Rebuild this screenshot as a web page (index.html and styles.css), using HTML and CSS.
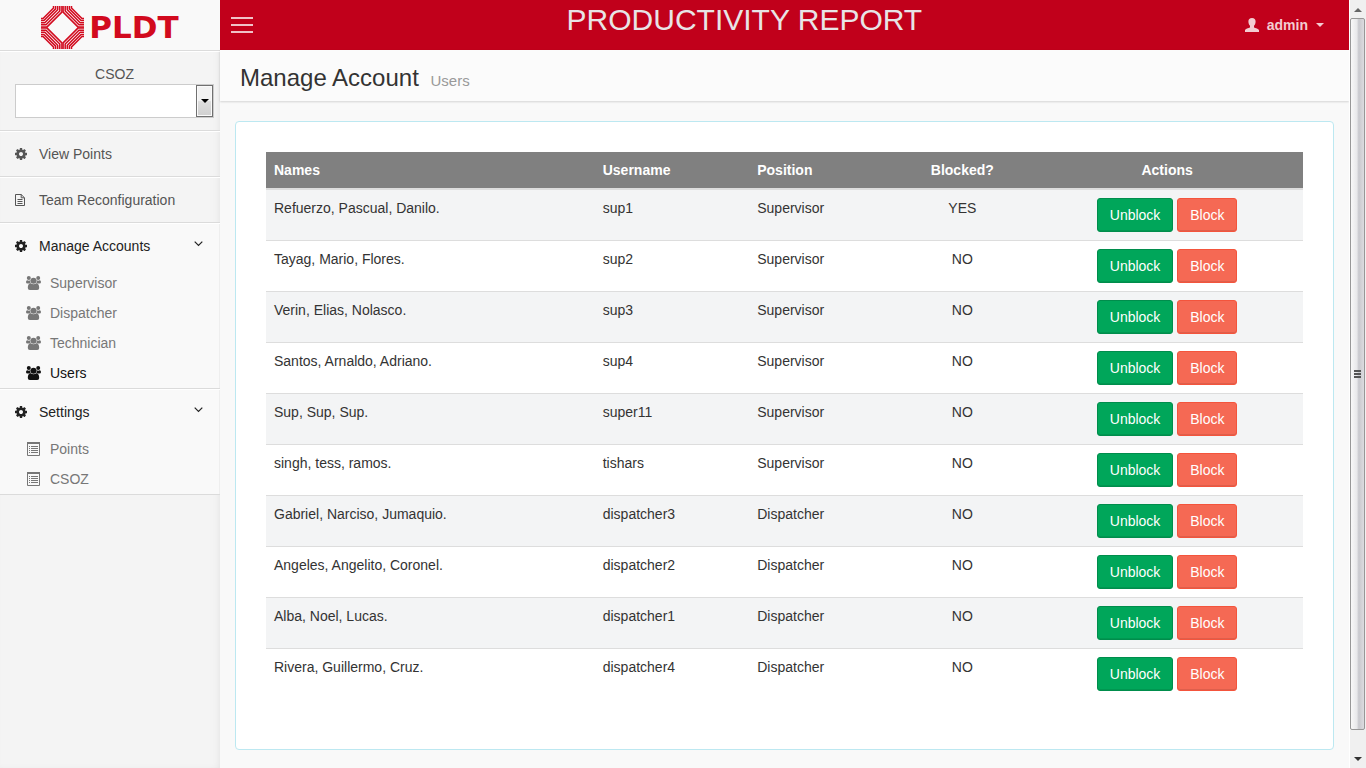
FILE: index.html
```html
<!DOCTYPE html>
<html lang="en">
<head>
<meta charset="utf-8">
<meta name="viewport" content="width=device-width, initial-scale=1">
<title>Productivity Report - Manage Account</title>
<link rel="stylesheet" href="styles.css">
</head>
<body>
<svg class="defs" aria-hidden="true">
  <symbol id="gear" viewBox="0 -128 1536 1536"><path fill="currentColor" d="M1024 640q0-106-75-181t-181-75-181 75-75 181 75 181 181 75 181-75 75-181zm512-109v222q0 12-8 23t-20 13l-185 28q-19 54-39 91 35 50 107 138 10 12 10 25t-9 23q-27 37-99 108t-94 71q-12 0-26-9l-138-108q-44 23-91 38-16 136-29 186-7 28-36 28h-222q-14 0-24.500-8.500t-11.500-21.500l-28-184q-49-16-90-37l-141 107q-10 9-25 9-14 0-25-11-126-114-165-168-7-10-7-23 0-12 8-23 15-21 51-66.500t54-70.500q-27-50-41-99l-183-27q-13-2-21-12.500t-8-23.500v-222q0-12 8-23t19-13l186-28q14-46 39-92-40-57-107-138-10-12-10-24 0-10 9-23 26-36 98.500-107.500t94.500-71.500q13 0 26 10l138 107q44-23 91-38 16-136 29-186 7-28 36-28h222q14 0 24.500 8.500t11.500 21.500l28 184q49 16 90 37l142-107q9-9 24-9 13 0 25 10 129 119 165 170 7 8 7 22 0 12-8 23-15 21-51 66.500t-54 70.500q26 50 41 98l183 28q13 2 21 12.500t8 23.500z"/></symbol>
  <symbol id="file" viewBox="0 0 10 12"><path fill="none" stroke="currentColor" d="M.5.5h5.700l3.300 3.300v7.700h-9zM6.200.5v3.300h3.300M2.500 5.500h5M2.500 7.500h5M2.500 9.500h5"/></symbol>
  <symbol id="group" viewBox="0 0 15 14"><g fill="currentColor"><circle cx="2.800" cy="2" r="2"/><circle cx="12.200" cy="2" r="2"/><path d="M1.300 4.200q1.700 1 3.200-.1a3.600 3.600 0 0 0 .3 3.300H1.500Q0 7.400 0 5.900 0 4.200 1.300 4.200zM13.700 4.200q-1.700 1-3.200-.1a3.600 3.600 0 0 1-.3 3.300h3.300q1.500 0 1.500-1.500 0-1.700-1.300-1.700z"/><circle cx="7.500" cy="4.800" r="3"/><path d="M4.700 7.300q2.800 2 5.600 0 2.900.3 2.900 4.600 0 2.100-2 2.100H3.800q-2 0-2-2.100 0-4.300 2.900-4.600z"/></g></symbol>
  <symbol id="list" viewBox="0 0 13 14"><path fill="none" stroke="currentColor" d="M.5.5h12v13H.5z"/><path fill="currentColor" d="M0 0h13v2H0zM2 4h1v1H2zM2 6h1v1H2zM2 8h1v1H2zM2 10h1v1H2zM4 4h7v1H4zM4 6h7v1H4zM4 8h7v1H4zM4 10h7v1H4z"/></symbol>
  <symbol id="chevron" viewBox="0 0 9 6"><path fill="none" stroke="currentColor" stroke-width="1.200" d="M.7.700l3.800 3.800L8.300.7"/></symbol>
  <symbol id="arc" viewBox="0 0 22 22"><path fill="none" stroke="#d20a1e" stroke-width="1.500" d="M12.500 0V2L2 12.500H0M14.600 0V2.900L2.900 14.600H0M16.700 0V3.800L3.800 16.700H0M18.800 0V5L5 18.800H0M20.900 0V6.100L6.100 20.900H0"/></symbol>
</svg>
<div class="app">
  <aside class="sidebar">
    <a class="brand" href="#" aria-label="PLDT home">
      <svg class="brand-mark" viewBox="0 0 43 43" aria-hidden="true">
        <use href="#arc" width="22" height="22"/>
        <use href="#arc" width="22" height="22" transform="translate(43 0) scale(-1 1)"/>
        <use href="#arc" width="22" height="22" transform="translate(0 43) scale(1 -1)"/>
        <use href="#arc" width="22" height="22" transform="translate(43 43) scale(-1 -1)"/>
      </svg>
      <span class="brand-name">PLDT</span>
    </a>
    <form class="zone">
      <label for="csoz">CSOZ</label>
      <div class="zone-field">
        <select id="csoz"><option></option></select>
        <span class="zone-arrow"></span>
      </div>
    </form>
    <nav>
      <ul class="menu">
        <li><a href="#"><span class="slot"><svg class="i-gear"><use href="#gear"/></svg></span>View Points</a></li>
        <li><a href="#"><span class="slot"><svg class="i-file"><use href="#file"/></svg></span>Team Reconfiguration</a></li>
        <li class="open"><a href="#"><span class="slot"><svg class="i-gear"><use href="#gear"/></svg></span>Manage Accounts<svg class="i-chevron"><use href="#chevron"/></svg></a>
          <ul class="submenu">
            <li><a href="#"><span class="slot"><svg class="i-group"><use href="#group"/></svg></span>Supervisor</a></li>
            <li><a href="#"><span class="slot"><svg class="i-group"><use href="#group"/></svg></span>Dispatcher</a></li>
            <li><a href="#"><span class="slot"><svg class="i-group"><use href="#group"/></svg></span>Technician</a></li>
            <li><a class="current" href="#"><span class="slot"><svg class="i-group"><use href="#group"/></svg></span>Users</a></li>
          </ul>
        </li>
        <li class="open"><a href="#"><span class="slot"><svg class="i-gear"><use href="#gear"/></svg></span>Settings<svg class="i-chevron"><use href="#chevron"/></svg></a>
          <ul class="submenu">
            <li><a href="#"><span class="slot"><svg class="i-list"><use href="#list"/></svg></span>Points</a></li>
            <li><a href="#"><span class="slot"><svg class="i-list"><use href="#list"/></svg></span>CSOZ</a></li>
          </ul>
        </li>
      </ul>
    </nav>
  </aside>
  <div class="main">
    <header class="topbar">
      <button class="toggle" type="button" aria-label="Toggle navigation"><span></span><span></span><span></span></button>
      <div class="app-title">PRODUCTIVITY REPORT</div>
      <button class="user" type="button">
        <svg class="i-user" viewBox="0 0 14 14" aria-hidden="true"><path fill="currentColor" d="M7 0c2.400 0 3.600 1.400 3.600 3.500 0 1.800-.6 3.300-1.600 4.200v1.600c0 .7 4 1.200 5 2.700V14H0v-2c1-1.500 5-2 5-2.700V7.700C4 6.800 3.400 5.300 3.400 3.500 3.400 1.400 4.600 0 7 0z"/></svg>
        <span>admin</span><span class="caret"></span>
      </button>
    </header>
    <div class="page-head"><h1>Manage Account <small>Users</small></h1></div>
    <main class="content">
      <section class="panel">
        <table>
          <colgroup><col class="c-name"><col class="c-user"><col class="c-pos"><col class="c-block"><col class="c-act"></colgroup>
          <thead><tr><th>Names</th><th>Username</th><th>Position</th><th class="mid">Blocked?</th><th class="mid">Actions</th></tr></thead>
          <tbody>
            <tr><td>Refuerzo, Pascual, Danilo.</td><td>sup1</td><td>Supervisor</td><td class="mid">YES</td><td class="mid"><button class="btn ok" type="button">Unblock</button> <button class="btn no" type="button">Block</button></td></tr>
            <tr><td>Tayag, Mario, Flores.</td><td>sup2</td><td>Supervisor</td><td class="mid">NO</td><td class="mid"><button class="btn ok" type="button">Unblock</button> <button class="btn no" type="button">Block</button></td></tr>
            <tr><td>Verin, Elias, Nolasco.</td><td>sup3</td><td>Supervisor</td><td class="mid">NO</td><td class="mid"><button class="btn ok" type="button">Unblock</button> <button class="btn no" type="button">Block</button></td></tr>
            <tr><td>Santos, Arnaldo, Adriano.</td><td>sup4</td><td>Supervisor</td><td class="mid">NO</td><td class="mid"><button class="btn ok" type="button">Unblock</button> <button class="btn no" type="button">Block</button></td></tr>
            <tr><td>Sup, Sup, Sup.</td><td>super11</td><td>Supervisor</td><td class="mid">NO</td><td class="mid"><button class="btn ok" type="button">Unblock</button> <button class="btn no" type="button">Block</button></td></tr>
            <tr><td>singh, tess, ramos.</td><td>tishars</td><td>Supervisor</td><td class="mid">NO</td><td class="mid"><button class="btn ok" type="button">Unblock</button> <button class="btn no" type="button">Block</button></td></tr>
            <tr><td>Gabriel, Narciso, Jumaquio.</td><td>dispatcher3</td><td>Dispatcher</td><td class="mid">NO</td><td class="mid"><button class="btn ok" type="button">Unblock</button> <button class="btn no" type="button">Block</button></td></tr>
            <tr><td>Angeles, Angelito, Coronel.</td><td>dispatcher2</td><td>Dispatcher</td><td class="mid">NO</td><td class="mid"><button class="btn ok" type="button">Unblock</button> <button class="btn no" type="button">Block</button></td></tr>
            <tr><td>Alba, Noel, Lucas.</td><td>dispatcher1</td><td>Dispatcher</td><td class="mid">NO</td><td class="mid"><button class="btn ok" type="button">Unblock</button> <button class="btn no" type="button">Block</button></td></tr>
            <tr><td>Rivera, Guillermo, Cruz.</td><td>dispatcher4</td><td>Dispatcher</td><td class="mid">NO</td><td class="mid"><button class="btn ok" type="button">Unblock</button> <button class="btn no" type="button">Block</button></td></tr>
          </tbody>
        </table>
      </section>
    </main>
  </div>
  <div class="scrollbar" aria-hidden="true">
    <span class="arrow up"></span>
    <span class="thumb"><i></i><i></i><i></i></span>
    <span class="arrow down"></span>
  </div>
</div>
</body>
</html>
```
FILE: styles.css
```css
* { box-sizing: border-box; }
body {
  margin: 0;
  background: #f9f9f9;
  color: #333;
  font: 14px/20px "Liberation Sans", Arial, sans-serif;
}
a { color: inherit; text-decoration: none; }
ul { margin: 0; padding: 0; list-style: none; }
button, select { font: inherit; }
svg { display: block; }
.defs { position: absolute; width: 0; height: 0; }
.app { display: flex; min-height: 100vh; }

/* Sidebar */
.sidebar {
  flex: 0 0 220px;
  background: #f4f4f4;
  box-shadow: inset -3px 0 8px -4px rgba(0, 0, 0, .1);
}
.brand {
  display: flex;
  align-items: center;
  justify-content: center;
  gap: 5px;
  height: 51px;
  padding-top: 4px;
  background: #f9f9f9;
  border-bottom: 1px solid #dbdbdb;
}
.brand-mark { width: 43px; height: 43px; }
.brand-name {
  color: #d20a1e;
  font: bold 31px/40px "DejaVu Sans", sans-serif;
}
.zone {
  padding: 12px 6px 12px 15px;
  border-top: 1px solid #fff;
  border-bottom: 1px solid #dbdbdb;
  color: #555;
  text-align: center;
}
.zone label { display: block; }
.zone-field { position: relative; }
.zone-field select {
  display: block;
  appearance: none;
  width: 100%;
  height: 34px;
  border: 1px solid #ccc;
  border-radius: 0;
  background: #fff;
}
.zone-arrow {
  position: absolute;
  top: 1px;
  right: 1px;
  bottom: 1px;
  width: 17px;
  border: 1px solid #707070;
  box-shadow: inset 0 0 0 1px #fafafa;
  background: linear-gradient(#f2f2f2 0 48%, #dedede 52%, #cfcfcf);
  pointer-events: none;
}
.zone-arrow::after {
  content: "";
  position: absolute;
  top: 13px;
  left: 4px;
  border: solid transparent;
  border-width: 4px 4px 0;
  border-top-color: #000;
}
.menu > li {
  border-top: 1px solid #fff;
  border-bottom: 1px solid #dbdbdb;
}
.menu > li > a {
  display: flex;
  align-items: center;
  padding: 12px 17px 12px 15px;
  color: #555;
}
.menu > .open {
  background: #f9f9f9;
  box-shadow: inset -1px 0 #eee;
}
.menu > .open > a { color: #222; }
.slot { flex: 0 0 24px; }
.submenu a {
  display: flex;
  align-items: center;
  padding: 5px 26px;
  color: #777;
}
.submenu .current { color: #111; }
.i-gear { width: 12px; height: 12px; }
.i-file { width: 10px; height: 12px; }
.i-group { width: 15px; height: 14px; }
.i-list { width: 13px; height: 14px; margin-left: 1px; }
.i-chevron { width: 9px; height: 6px; margin: 0 0 5px auto; }

/* Top bar */
.main { flex: 1; min-width: 0; }
.topbar {
  display: flex;
  height: 50px;
  background: #c1001b;
}
.toggle {
  display: flex;
  flex-direction: column;
  justify-content: center;
  gap: 5px;
  width: 44px;
  padding: 0 11px;
  border: 0;
  background: none;
}
.toggle span { height: 2px; background: #f0c2c8; }
.app-title {
  flex: 1;
  color: #e8e4e6;
  font-size: 30px;
  line-height: 40px;
  text-align: center;
}
.user {
  display: flex;
  align-items: center;
  gap: 8px;
  padding: 0 25px 0 20px;
  border: 0;
  background: none;
  color: #f3ccd1;
  font-weight: bold;
}
.i-user { width: 14px; height: 14px; }
.caret {
  border: solid transparent;
  border-width: 4px 4px 0;
  border-top-color: currentColor;
}

/* Page */
.page-head {
  padding: 15px 20px 11px;
  background: #fbfbfb;
  box-shadow: 0 1px 2px rgba(0, 0, 0, .15);
}
.page-head h1 {
  margin: 0;
  font-size: 24px;
  font-weight: normal;
  line-height: 25px;
}
.page-head small {
  padding-left: 5px;
  color: #999;
  font-size: 15px;
  line-height: 1;
}
.content { padding: 20px 15px 16px; }
.panel {
  padding: 30px 30px 50px;
  background: #fff;
  border: 1px solid #bce8f1;
  border-radius: 4px;
}
table {
  width: 100%;
  table-layout: fixed;
  border-spacing: 0;
}
.c-name { width: 31.7%; }
.c-user { width: 14.9%; }
.c-pos { width: 13.9%; }
.c-block { width: 13.3%; }
.c-act { width: 26.2%; }
th {
  padding: 8px;
  background: #808080;
  border-bottom: 2px solid #ddd;
  color: #fff;
  text-align: left;
}
td {
  padding: 8px;
  border-bottom: 1px solid #ddd;
  vertical-align: top;
}
tbody tr:nth-child(odd) { background: #f3f4f5; }
tbody tr:last-child td { border-bottom: 0; }
.mid { text-align: center; }
.btn {
  padding: 6px 12px;
  border: 1px solid;
  border-radius: 3px;
  box-shadow: inset 0 -1px 0 rgba(0, 0, 0, .09);
  color: #fff;
  vertical-align: top;
}
.ok { background: #00a65a; border-color: #008d4c; }
.no { background: #f56954; border-color: #f4543c; }

/* Scroll bar */
.scrollbar {
  display: flex;
  flex-direction: column;
  align-items: center;
  flex: 0 0 17px;
  padding: 8px 1px 7px 0;
  background: #f0f0f0;
  border-left: 1px solid #fff;
}
.arrow { border: solid transparent; }
.up { border-width: 0 4px 4px; border-bottom-color: #666; }
.down { border-width: 4px 4px 0; border-top-color: #333; }
.thumb {
  display: flex;
  flex: 1;
  flex-direction: column;
  align-items: center;
  justify-content: center;
  gap: 1px;
  width: 15px;
  margin: 6px 0 27px;
  border: 1px solid #979797;
  border-radius: 2px;
  background: linear-gradient(90deg, #f8f8f8, #e8e8ea 45%, #c8c8cd 60%, #dcdce0);
}
.thumb i { width: 7px; height: 2px; background: #555; }
```
